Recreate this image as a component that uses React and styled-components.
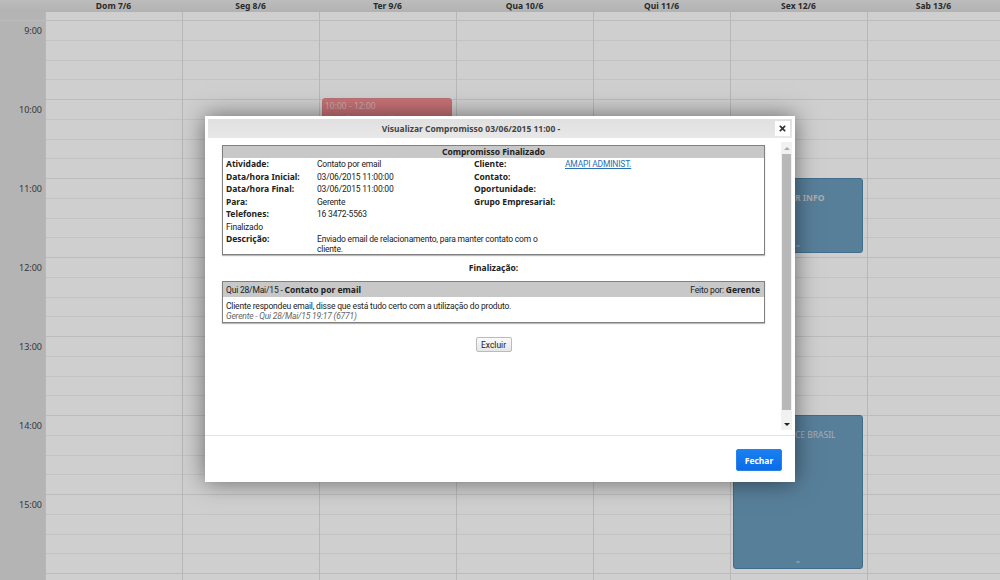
import React from "react";
import styled, { createGlobalStyle } from "styled-components";
import { FaTimes } from "react-icons/fa";

const FONT = `"Roboto", "Noto Sans", sans-serif`;
const FONT_BOLD = `"Noto Sans", Verdana, sans-serif`;

const days = ["Dom 7/6", "Seg 8/6", "Ter 9/6", "Qua 10/6", "Qui 11/6", "Sex 12/6", "Sab 13/6"];
const hours = ["9:00", "10:00", "11:00", "12:00", "13:00", "14:00", "15:00", ""];
const SLOT = 19.75;

const events = {
  2: [{ top: 77, height: 158, color: "red", time: "10:00 - 12:00", title: "Ligação para o cliente" }],
  5: [
    { top: 157, height: 75, color: "blue", title: "R INFO", indent: 61, bold: true },
    { top: 394, height: 154, color: "blue", title: "CE BRASIL", indent: 61 },
  ],
};

const details = [
  ["Atividade:", "Contato por email", "Cliente:", "AMAPI ADMINIST."],
  ["Data/hora Inicial:", "03/06/2015 11:00:00", "Contato:", ""],
  ["Data/hora Final:", "03/06/2015 11:00:00", "Oportunidade:", ""],
  ["Para:", "Gerente", "Grupo Empresarial:", ""],
  ["Telefones:", "16 3472-5563", "", ""],
];

const GlobalStyle = createGlobalStyle`
  html, body {
    margin: 0;
    height: 100%;
    overflow: hidden;
    background: #fff;
    font-family: ${FONT_BOLD};
  }
`;

const Root = styled.div`
  position: relative;
  width: 1000px;
  height: 580px;
  overflow: hidden;
`;

const Calendar = styled.div`
  display: grid;
  grid-template-columns: 45px repeat(6, 137px) 133px;
  grid-template-rows: 12px 9px 1fr;
  height: 580px;
  background: #fff;
`;

const DayHead = styled.div`
  background: linear-gradient(#e8e8e8, #dcdcdc);
  color: #333;
  font-size: 8.5px;
  font-weight: bold;
  line-height: 12px;
  text-align: center;
`;

const AllDayCell = styled.div`
  background: ${(p) => (p.$gutter ? "#dedede" : "#fff")};
  border-left: ${(p) => (p.$gutter ? "none" : "1px solid #e2e2e2")};
  border-bottom: 1px solid #e8e8e8;
`;

const HourColumn = styled.div`
  background: #dedede;
`;

const HourLabel = styled.div`
  height: ${SLOT * 4}px;
  padding: 4px 3px 0 0;
  box-sizing: border-box;
  color: #444;
  font-size: 9px;
  line-height: 12px;
  text-align: right;
`;

const DayColumn = styled.div`
  position: relative;
  border-left: 1px solid #e2e2e2;
`;

const Slot = styled.div`
  height: ${SLOT}px;
  box-sizing: border-box;
  border-bottom: 1px solid ${(p) => (p.$hour ? "#e8e8e8" : "#f0f0f0")};
`;

const Event = styled.div`
  position: absolute;
  left: 2px;
  width: 130px;
  box-sizing: border-box;
  border: 1px solid ${(p) => (p.$color === "red" ? "#e58d90" : "#4f87ab")};
  border-radius: 3px;
  background: ${(p) => (p.$color === "red" ? "#f58c90" : "#6d9dbe")};
  color: #eee;
  font-size: 8.5px;
  overflow: hidden;
`;

const EventTime = styled.div`
  padding: 2px 0 0 2px;
  line-height: 10px;
  color: #f3d5d5;
`;

const EventTitle = styled.div`
  padding: ${(p) => (p.$time ? "2px 0 0 2px" : "13px 0 0 0")};
  padding-left: ${(p) => p.$indent || 2}px;
  color: #d5d5d5;
  font-weight: ${(p) => (p.$bold ? "bold" : "normal")};
  white-space: nowrap;
`;

const EventHandle = styled.div`
  position: absolute;
  bottom: 3px;
  left: 0;
  right: 0;
  color: #c8d4dc;
  font-size: 7px;
  line-height: 7px;
  text-align: center;
`;

const Overlay = styled.div`
  position: absolute;
  inset: 0;
  background: rgba(0, 0, 0, 0.19);
`;

const Modal = styled.div`
  position: absolute;
  left: 205px;
  top: 116px;
  width: 590px;
  height: 366px;
  box-sizing: border-box;
  padding: 3px;
  display: flex;
  flex-direction: column;
  background: #fff;
  box-shadow: 0 0 22px rgba(0, 0, 0, 0.5);
  color: #222;
  font-family: ${FONT};
  font-size: 8.5px;
  letter-spacing: -0.19px;
`;

const TitleBar = styled.div`
  flex: none;
  height: 19px;
  padding-right: 58px;
  display: flex;
  align-items: center;
  justify-content: center;
  position: relative;
  background: linear-gradient(#e0e0e0, #e8e8e8);
  color: #444;
  font-family: ${FONT_BOLD};
  font-weight: bold;
  letter-spacing: 0;
`;

const CloseButton = styled.button`
  position: absolute;
  right: 2px;
  top: 2px;
  width: 15px;
  height: 15px;
  padding: 0;
  display: flex;
  align-items: center;
  justify-content: center;
  border: none;
  background: #fff;
  color: #333;
`;

const ModalMain = styled.div`
  flex: 1;
  min-height: 0;
  display: flex;
  justify-content: space-between;
  padding: 4px 0 0 14px;
`;

const Content = styled.div`
  width: 543px;
  padding-top: 3px;
  display: flex;
  flex-direction: column;
  align-items: stretch;
  b {
    font-family: ${FONT_BOLD};
    letter-spacing: 0;
  }
`;

const Box = styled.div`
  border: 1px solid #808080;
  box-shadow: 0 1px 1px #bbb;
`;

const BoxHead = styled.div`
  height: ${(p) => p.$height}px;
  line-height: ${(p) => p.$height}px;
  background: #c8c8c8;
  color: #222;
  font-family: ${FONT_BOLD};
  font-weight: bold;
  letter-spacing: 0;
  text-align: center;
`;

const EntryHead = styled(BoxHead)`
  display: flex;
  justify-content: space-between;
  padding: 0 4px 0 3px;
  font-family: ${FONT};
  font-weight: normal;
  letter-spacing: -0.19px;
  text-align: left;
`;

const DetailTable = styled.table`
  width: 100%;
  border-collapse: collapse;
  table-layout: fixed;
  font-size: 8.5px;
`;

const Row = styled.tr`
  height: 12.5px;
  line-height: 12.5px;
`;

const Label = styled.td`
  padding: 0 0 0 3px;
  font-family: ${FONT_BOLD};
  font-weight: bold;
  letter-spacing: 0;
  vertical-align: top;
  white-space: nowrap;
`;

const Value = styled.td`
  padding: 0;
  vertical-align: top;
  line-height: ${(p) => (p.$wrap ? "10px" : "12.5px")};
  padding-top: ${(p) => (p.$wrap ? "1px" : "0")};
`;

const StatusCell = styled.td`
  padding: 0 0 0 3px;
  vertical-align: top;
`;

const ClientLink = styled.a`
  color: #2a6fb0;
  text-decoration: underline;
`;

const SectionTitle = styled.div`
  height: 26px;
  line-height: 26px;
  font-family: ${FONT_BOLD};
  font-weight: bold;
  letter-spacing: 0;
  text-align: center;
`;

const EntryBody = styled.div`
  padding: 4px 3px 1px;
  line-height: 10px;
`;

const EntryMeta = styled.div`
  color: #666;
  font-style: italic;
`;

const Actions = styled.div`
  padding-top: 14px;
  display: flex;
  justify-content: center;
`;

const SmallButton = styled.button`
  width: 36px;
  height: 15px;
  padding: 0;
  border: 1px solid #bbb;
  border-radius: 2px;
  background: linear-gradient(#fafafa, #e6e6e6);
  color: #222;
  font-family: ${FONT};
  font-size: 8.5px;
`;

const Scrollbar = styled.div`
  flex: none;
  width: 11px;
  height: 288px;
  display: flex;
  flex-direction: column;
  background: #f1f1f1;
`;

const ScrollArrow = styled.div`
  height: 12px;
  display: flex;
  align-items: center;
  justify-content: center;
  &::before {
    content: "";
    border-left: 3px solid transparent;
    border-right: 3px solid transparent;
    ${(p) => (p.$down ? "border-top: 3px solid #222;" : "border-bottom: 3px solid #aaa;")}
  }
`;

const ScrollThumb = styled.div`
  width: 9px;
  height: 256px;
  margin: 0 1px;
  background: #b8b8b8;
`;

const ScrollRest = styled.div`
  flex: 1;
`;

const Footer = styled.div`
  flex: none;
  box-sizing: border-box;
  height: 47px;
  margin: 5px -3px -3px;
  padding: 13px 13px 0 0;
  border-top: 1px solid #e4e4e4;
  display: flex;
  justify-content: flex-end;
  align-items: flex-start;
`;

const PrimaryButton = styled.button`
  width: 46px;
  height: 22px;
  padding: 0;
  border: 1px solid #2a80e8;
  border-radius: 2px;
  background: linear-gradient(#1a80f0, #0a6ce8);
  color: #fff;
  font-family: ${FONT_BOLD};
  font-size: 8.5px;
  font-weight: bold;
`;

const App = () => {
  return (
    <Root>
      <GlobalStyle />
      <Calendar>
        <DayHead />
        {days.map((day) => (
          <DayHead key={day}>{day}</DayHead>
        ))}
        <AllDayCell $gutter />
        {days.map((day) => (
          <AllDayCell key={day} />
        ))}
        <HourColumn>
          {hours.map((hour, index) => (
            <HourLabel key={index}>{hour}</HourLabel>
          ))}
        </HourColumn>
        {days.map((day, dayIndex) => (
          <DayColumn key={day}>
            {hours.flatMap((hour, hourIndex) =>
              [0, 1, 2, 3].map((part) => <Slot key={hourIndex + "-" + part} $hour={part === 3} />)
            )}
            {(events[dayIndex] || []).map((event) => (
              <Event key={event.title} $color={event.color} style={{ top: event.top, height: event.height }}>
                {event.time ? <EventTime>{event.time}</EventTime> : null}
                <EventTitle $time={event.time} $indent={event.indent} $bold={event.bold}>
                  {event.title}
                </EventTitle>
                <EventHandle>=</EventHandle>
              </Event>
            ))}
          </DayColumn>
        ))}
      </Calendar>
      <Overlay />
      <Modal>
        <TitleBar>
          Visualizar Compromisso 03/06/2015 11:00 -
          <CloseButton>
            <FaTimes size={9} />
          </CloseButton>
        </TitleBar>
        <ModalMain>
          <Content>
            <Box>
              <BoxHead $height={12}>Compromisso Finalizado</BoxHead>
              <DetailTable>
                <colgroup>
                  <col width="94" />
                  <col width="154" />
                  <col width="94" />
                  <col />
                </colgroup>
                <tbody>
                  {details.map((row) => (
                    <Row key={row[0]}>
                      <Label>{row[0]}</Label>
                      <Value>{row[1]}</Value>
                      <Label>{row[2]}</Label>
                      <Value>{row[3] ? <ClientLink href="#">{row[3]}</ClientLink> : null}</Value>
                    </Row>
                  ))}
                  <Row>
                    <StatusCell colSpan={4}>Finalizado</StatusCell>
                  </Row>
                  <Row>
                    <Label>Descrição:</Label>
                    <Value $wrap colSpan={3}>
                      Enviado email de relacionamento, para manter contato com o
                      <br />
                      cliente.
                    </Value>
                  </Row>
                </tbody>
              </DetailTable>
            </Box>
            <SectionTitle>Finalização:</SectionTitle>
            <Box>
              <EntryHead $height={15}>
                <span>
                  Qui 28/Mai/15 - <b>Contato por email</b>
                </span>
                <span>
                  Feito por: <b>Gerente</b>
                </span>
              </EntryHead>
              <EntryBody>
                Cliente respondeu email, disse que está tudo certo com a utilização do produto.
                <EntryMeta>Gerente - Qui 28/Mai/15 19:17 (6771)</EntryMeta>
              </EntryBody>
            </Box>
            <Actions>
              <SmallButton>Excluir</SmallButton>
            </Actions>
          </Content>
          <Scrollbar>
            <ScrollArrow />
            <ScrollThumb />
            <ScrollRest />
            <ScrollArrow $down />
          </Scrollbar>
        </ModalMain>
        <Footer>
          <PrimaryButton>Fechar</PrimaryButton>
        </Footer>
      </Modal>
    </Root>
  );
};

export default App;
